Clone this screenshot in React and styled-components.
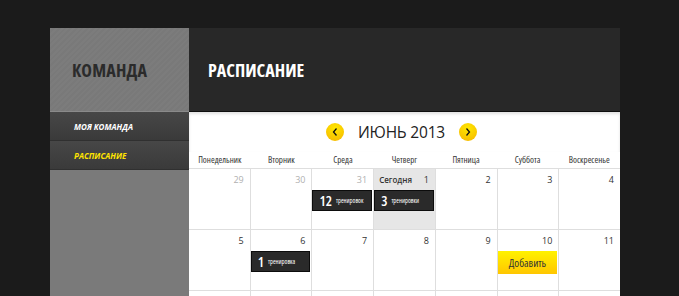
import React from "react";
import styled, { createGlobalStyle } from "styled-components";

const Global = createGlobalStyle`
  html, body { margin: 0; padding: 0; background: #1b1b1b; }
  body { font-family: "Open Sans", "Liberation Sans", sans-serif; }
`;

const Page = styled.div`
  padding: 28px 0 0 50px;
  height: 296px;
  box-sizing: border-box;
  overflow: hidden;
`;

const Panel = styled.div`
  display: grid;
  grid-template-columns: 139px 431px;
  width: 570px;
`;

const Sidebar = styled.div`
  display: flex;
  flex-direction: column;
  background: #7a7a7a;
  min-height: 300px;
`;

const SideHead = styled.div`
  height: 83px;
  display: flex;
  align-items: center;
  padding-left: 22px;
  background: repeating-linear-gradient(
    135deg,
    #7c7c7c 0px,
    #7c7c7c 2px,
    #797979 2px,
    #797979 4px
  );
  border-bottom: 1px solid #8a8a8a;
  font-size: 18px;
  font-weight: 700;
  font-stretch: 75%;
  color: #2b2b2b;
  letter-spacing: 0.2px;
`;

const MenuItem = styled.div`
  height: 28px;
  display: flex;
  align-items: center;
  padding-left: 24px;
  background: linear-gradient(#474747, #3a3a3a);
  border-bottom: 1px solid #303030;
  font-size: 8px;
  font-weight: 700;
  font-style: italic;
  text-transform: uppercase;
  color: ${(p) => (p.active ? "#ffe400" : "#ffffff")};
`;

const Main = styled.div`
  display: flex;
  flex-direction: column;
  background: #fff;
`;

const MainHead = styled.div`
  height: 83px;
  display: flex;
  align-items: center;
  padding-left: 19px;
  background: #282828;
  border-bottom: 1px solid #0e0e0e;
  font-size: 18px;
  font-weight: 700;
  font-stretch: 75%;
  color: #fff;
`;

const TitleRow = styled.div`
  height: 40px;
  display: flex;
  align-items: center;
  justify-content: center;
  gap: 12px;
  padding-right: 6px;
  box-shadow: inset 0 2px 3px rgba(0, 0, 0, 0.12);
`;

const Month = styled.div`
  font-size: 15.5px;
  letter-spacing: -0.2px;
  color: #222;
  padding: 0 2px;
`;

const Arrow = styled.div`
  width: 18px;
  height: 18px;
  border-radius: 50%;
  background: radial-gradient(circle at 50% 30%, #ffe800, #f5b400);
  display: flex;
  align-items: center;
  justify-content: center;
`;

const DayNames = styled.div`
  display: grid;
  grid-template-columns: repeat(7, 1fr);
  height: 16px;
  border-bottom: 1px solid #dedede;
`;

const DayName = styled.div`
  font-size: 9px;
  font-stretch: 75%;
  color: #333;
  text-align: center;
  line-height: 16px;
`;

const Grid = styled.div`
  display: grid;
  grid-template-columns: repeat(7, 1fr);
  grid-auto-rows: 60px;
  gap: 1px;
  background: #dedede;
`;

const Cell = styled.div`
  background: ${(p) => (p.today ? "#e6e6e6" : "#fff")};
  display: flex;
  flex-direction: column;
`;

const CellTop = styled.div`
  height: 21px;
  display: flex;
  justify-content: space-between;
  align-items: center;
  padding: 0 6px 0 5px;
  font-size: 9px;
  color: ${(p) => (p.muted ? "#b0b0b0" : "#333")};
`;

const Today = styled.span`
  font-size: 8px;
  font-weight: 600;
  color: #333;
`;

const Event = styled.div`
  height: 19px;
  margin-right: 1px;
  background: #2a2a2a;
  border: 1px solid #0c0c0c;
  display: flex;
  align-items: center;
  gap: 4px;
  padding-left: 6px;
  color: #fff;
  font-stretch: 80%;
`;

const Count = styled.span`
  font-size: 14px;
  font-weight: 600;
`;

const Label = styled.span`
  font-size: 6.5px;
`;

const AddButton = styled.div`
  height: 23px;
  margin-right: 1px;
  background: linear-gradient(#fff200, #ffc600);
  color: #333;
  font-size: 11px;
  font-stretch: 85%;
  display: flex;
  align-items: center;
  justify-content: center;
`;

const Chevron = ({ dir }) => (
  <svg width="8" height="10" viewBox="0 0 8 10">
    <path
      d={dir === "left" ? "M5.5 1.5 L2.5 5 L5.5 8.5" : "M2.5 1.5 L5.5 5 L2.5 8.5"}
      fill="none"
      stroke="#111"
      strokeWidth="1.3"
    />
  </svg>
);

const days = [
  "Понедельник",
  "Вторник",
  "Среда",
  "Четверг",
  "Пятница",
  "Суббота",
  "Воскресенье",
];

const cells = [
  { n: 29, muted: true },
  { n: 30, muted: true },
  { n: 31, muted: true, event: ["12", "тренировок"] },
  { n: 1, today: true, event: ["3", "тренировки"] },
  { n: 2 },
  { n: 3 },
  { n: 4 },
  { n: 5 },
  { n: 6, event: ["1", "тренировка"] },
  { n: 7 },
  { n: 8 },
  { n: 9 },
  { n: 10, add: true },
  { n: 11 },
  {},
  {},
  {},
  {},
  {},
  {},
  {},
];

export default function App() {
  return (
    <Page>
      <Global />
      <Panel>
        <Sidebar>
          <SideHead>КОМАНДА</SideHead>
          <MenuItem>Моя команда</MenuItem>
          <MenuItem active>Расписание</MenuItem>
        </Sidebar>
        <Main>
          <MainHead>РАСПИСАНИЕ</MainHead>
          <TitleRow>
            <Arrow>
              <Chevron dir="left" />
            </Arrow>
            <Month>ИЮНЬ 2013</Month>
            <Arrow>
              <Chevron dir="right" />
            </Arrow>
          </TitleRow>
          <DayNames>
            {days.map((d) => (
              <DayName key={d}>{d}</DayName>
            ))}
          </DayNames>
          <Grid>
            {cells.map((c, i) => (
              <Cell key={i} today={c.today}>
                <CellTop muted={c.muted}>
                  {c.today ? <Today>Сегодня</Today> : <span />}
                  <span>{c.n}</span>
                </CellTop>
                {c.event && (
                  <Event>
                    <Count>{c.event[0]}</Count>
                    <Label>{c.event[1]}</Label>
                  </Event>
                )}
                {c.add && <AddButton>Добавить</AddButton>}
              </Cell>
            ))}
          </Grid>
        </Main>
      </Panel>
    </Page>
  );
}
